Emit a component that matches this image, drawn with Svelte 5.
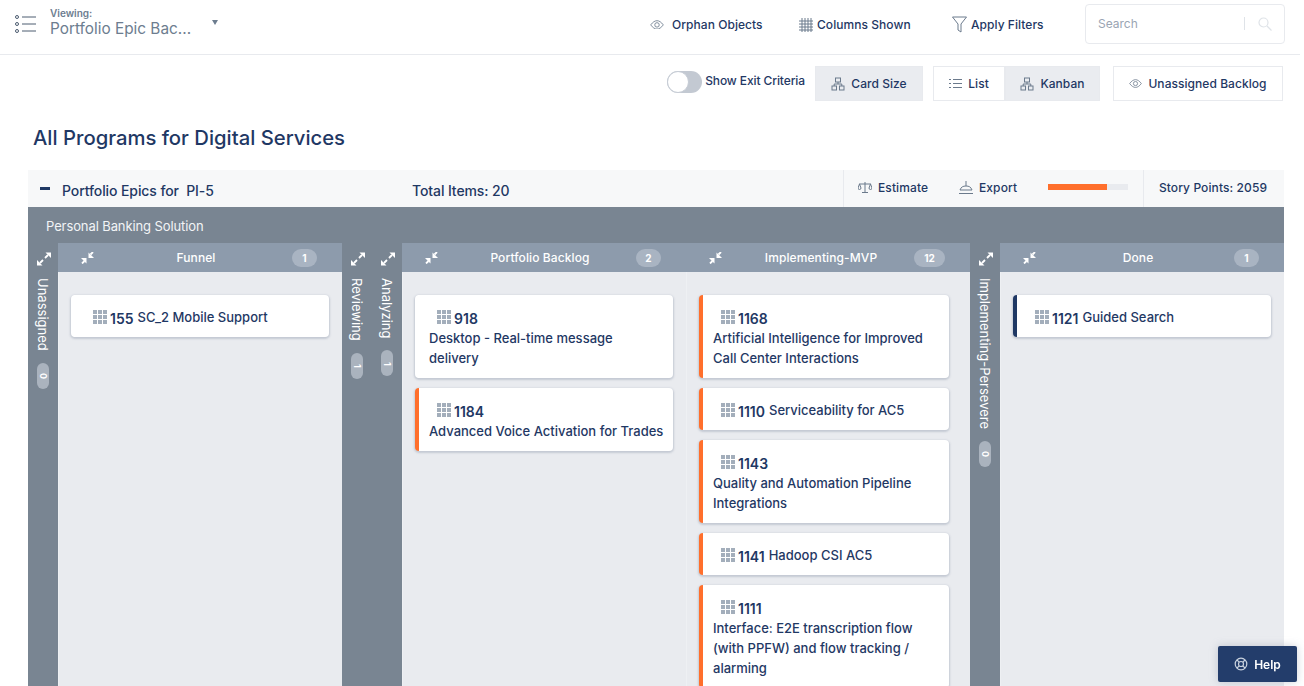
<script>
  const columns = [
    { name: 'Unassigned', count: 0, collapsed: true },
    { name: 'Funnel', count: 1, cards: [{ id: '155', title: 'SC_2 Mobile Support', inline: true, accent: 'none' }] },
    { name: 'Reviewing', count: 1, collapsed: true },
    { name: 'Analyzing', count: 1, collapsed: true },
    { name: 'Portfolio Backlog', count: 2, cards: [
      { id: '918', title: 'Desktop - Real-time message delivery', accent: 'none' },
      { id: '1184', title: 'Advanced Voice Activation for Trades', accent: 'orange' }
    ] },
    { name: 'Implementing-MVP', count: 12, scroll: true, cards: [
      { id: '1168', title: 'Artificial Intelligence for Improved Call Center Interactions', accent: 'orange' },
      { id: '1110', title: 'Serviceability for AC5', inline: true, accent: 'orange' },
      { id: '1143', title: 'Quality and Automation Pipeline Integrations', accent: 'orange' },
      { id: '1141', title: 'Hadoop CSI AC5', inline: true, accent: 'orange' },
      { id: '1111', title: 'Interface: E2E transcription flow (with PPFW) and flow tracking / alarming', accent: 'orange' }
    ] },
    { name: 'Implementing-Persevere', count: 0, collapsed: true },
    { name: 'Done', count: 1, cards: [{ id: '1121', title: 'Guided Search', inline: true, accent: 'navy' }] }
  ];
</script>

{#snippet eye(w)}
  <svg width={w} height={w * 0.7} viewBox="0 0 20 14" fill="none" stroke="#6b7a8c" stroke-width="1.2"><path d="M1 7c3-4 6-6 9-6s6 2 9 6c-3 4-6 6-9 6S4 11 1 7z"/><circle cx="10" cy="7" r="3.2"/></svg>
{/snippet}
{#snippet org()}
  <svg width="14" height="14" viewBox="0 0 14 14" fill="none" stroke="#6b7a8c" stroke-width="1"><rect x="4.5" y="1" width="5" height="4"/><rect x="1" y="9" width="4.5" height="4"/><rect x="8.5" y="9" width="4.5" height="4"/><path d="M7 5v2M3.2 9V7h7.6v2"/></svg>
{/snippet}
{#snippet expand()}
  <svg class="arrows" width="14" height="14" viewBox="0 0 14 14" fill="#fff" stroke="#fff" stroke-width="1.8"><path d="M8 6l3-3M3 11l3-3"/><path d="M8.500 0.500H14V6zM5.500 13.500H0V8z" stroke="none"/></svg>
{/snippet}
{#snippet collapse()}
  <svg class="arrows" width="13" height="12" viewBox="0 0 13 12" fill="#fff" stroke="#fff" stroke-width="1.800"><path d="M9.500 2.500L12 0M1 11.500l2.500-2.500"/><path d="M7.500 0.500V6H13zM5.500 11.500V6H0z" stroke="none"/></svg>
{/snippet}
{#snippet grid()}
  <svg class="grid" width="14" height="14" viewBox="0 0 14 14" fill="#a3aebb"><path d="M0 0h4v4H0zM5 0h4v4H5zM10 0h4v4h-4zM0 5h4v4H0zM5 5h4v4H5zM10 5h4v4h-4zM0 10h4v4H0zM5 10h4v4H5zM10 10h4v4h-4z"/></svg>
{/snippet}

<div class="page">
  <header class="nav">
    <svg class="menu" width="21" height="18" viewBox="0 0 21 18" fill="none" stroke="#4c5c70" stroke-width="1"><circle cx="2" cy="2" r="1.500"/><circle cx="2" cy="9" r="1.500"/><circle cx="2" cy="16" r="1.500"/><path d="M7 2h14M7 9h14M7 16h14"/></svg>
    <div class="viewing">
      <div class="label">Viewing:</div>
      <div class="value">Portfolio Epic Bac...</div>
    </div>
    <span class="caret"></span>
    <div class="nav-actions">
      <span class="act a1">{@render eye(14)}Orphan Objects</span>
      <span class="act a2">
        <svg width="14" height="14" viewBox="0 0 14 14" stroke="#6b7a8c" stroke-width="1"><path d="M3 0v14M6 0v14M9 0v14M12 0v14M0 3h14M0 6h14M0 9h14M0 12h14"/></svg>
        Columns Shown</span>
      <span class="act a3">
        <svg width="15" height="17" viewBox="0 0 15 17" fill="none" stroke="#6b7a8c" stroke-width="1"><path d="M.5 1h14L9 8v8l-3-2V8z"/></svg>
        Apply Filters</span>
    </div>
    <div class="search">
      <span>Search</span>
      <i class="sep"></i>
      <svg width="14" height="14" viewBox="0 0 14 14" fill="none" stroke="#dfe3e8" stroke-width="1.200"><circle cx="5.500" cy="5.500" r="4.500"/><path d="M9 9l4.500 4.500"/></svg>
    </div>
  </header>

  <div class="toolbar">
    <span class="toggle"><i></i></span>
    <span class="exit">Show Exit Criteria</span>
    <button class="btn on size">{@render org()}Card Size</button>
    <div class="seg">
      <button class="btn list">
        <svg width="13" height="11" viewBox="0 0 13 11" fill="none" stroke="#6b7a8c"><path d="M0 1.500h2M4 1.500h9M0 5.500h2M4 5.500h9M0 9.500h2M4 9.500h9"/></svg>
        List</button>
      <button class="btn on kanban">{@render org()}Kanban</button>
    </div>
    <button class="btn backlog">{@render eye(13)}Unassigned Backlog</button>
  </div>

  <h1>All Programs for Digital Services</h1>

  <div class="summary">
    <i class="minus"></i>
    <span class="pi">Portfolio Epics for&nbsp; PI-5</span>
    <span class="total">Total Items: 20</span>
    <div class="metrics">
      <span class="m est">
        <svg width="14" height="11" viewBox="0 0 14 11" fill="none" stroke="#6b7a8c"><path d="M7 0v10M4 10.500h6M1 2h12M0 6l1.500-4L3 6a1.500 1.500 0 01-3 0zM11 6l1.500-4L14 6a1.500 1.500 0 01-3 0z"/></svg>
        Estimate</span>
      <span class="m exp">
        <svg width="14" height="13" viewBox="0 0 14 13" fill="none" stroke="#6b7a8c"><path d="M7 0v5M1 9c1-3 3-4 6-4s5 1 6 4zM0 12.500h14"/></svg>
        Export</span>
      <span class="bar"><i></i></span>
    </div>
    <div class="points">Story Points: 2059</div>
  </div>

  <section class="board">
    <div class="solution">Personal Banking Solution</div>
    <div class="cols">
      {#each columns as c}
        {#if c.collapsed}
          <div class="rail">
            <span class="rail-icon">{@render expand()}</span>
            <span class="rail-name">{c.name}</span>
            <span class="rail-count">{c.count}</span>
          </div>
        {:else}
          <div class="col">
            <div class="col-head">
              {@render collapse()}
              <span class="col-name">{c.name}</span>
              <span class="pill" class:wide={c.count > 9}>{c.count}</span>
            </div>
            <div class="col-body" class:scroll={c.scroll}>
              {#each c.cards as k}
                <article class="card {k.accent}" class:inline={k.inline}>
                  <div class="id">{@render grid()}<b>{k.id}</b>{#if k.inline}<span class="t">{k.title}</span>{/if}</div>
                  {#if !k.inline}<div class="t">{k.title}</div>{/if}
                </article>
              {/each}
            </div>
          </div>
        {/if}
      {/each}
    </div>
  </section>

  <button class="help">
    <svg width="14" height="14" viewBox="0 0 14 14" fill="none" stroke="#c9d2de" stroke-width="1.200"><circle cx="7" cy="7" r="5.800"/><circle cx="7" cy="7" r="2.500"/><path d="M3 3l2.200 2.200M11 3L8.800 5.200M3 11l2.200-2.200M11 11L8.800 8.800"/></svg>
    Help</button>
</div>

<style>
  :global(body) { margin: 0; background: #fff; overflow: hidden; }
  .page { font-family: Inter, "Liberation Sans", sans-serif; color: #1f3864; height: 686px; overflow: hidden; font-size: 12px; font-weight: 500; }
  button { font: inherit; color: inherit; }

  .nav { height: 54px; border-bottom: 1px solid #e8eaee; display: flex; align-items: flex-start; margin-right: 4px; box-sizing: content-box; }
  .menu { margin: 15px 0 0 15px; flex: none; }
  .viewing { margin-left: 14px; width: 162px; flex: none; }
  .label { font-size: 10px; font-weight: 600; color: #6d7d8f; margin-top: 7px; line-height: 12px; }
  .value { font-size: 15.35px; font-weight: 400; color: #6d7d8f; line-height: 20px; }
  .caret { width: 0; height: 0; border: 3.500px solid transparent; border-top: 5px solid #6d7d8f; border-bottom: 0; margin-top: 20px; flex: none; }
  .nav-actions { flex: 1; display: flex; margin-top: 17px; margin-left: 432px; }
  .act { display: inline-flex; align-items: center; gap: 8px; height: 15px; white-space: nowrap; letter-spacing: .05px; flex: none; }
  .a1 { width: 149px; }
  .a2 { width: 153px; gap: 4px; }
  .a3 { gap: 4px; }
  .search { width: 200px; height: 40px; border: 1px solid #e8eaee; border-radius: 4px; display: flex; align-items: center; margin: 4px 15px 0 0; padding: 0 12px 1px; box-sizing: border-box; color: #9aa5b3; flex: none; }
  .search span { flex: 1; font-weight: 400; font-size: 12px; }
  .sep { width: 1px; height: 13px; background: #dfe3e8; margin-right: 13px; }

  .toolbar { display: flex; align-items: flex-start; justify-content: flex-end; margin: 11px 21px 0 0; height: 36px; }
  .toggle { width: 35px; height: 22px; border-radius: 11px; background: #c3c9d2; margin-top: 5px; position: relative; }
  .toggle i { position: absolute; left: 0; top: 0; width: 20px; height: 20px; border-radius: 50%; background: #fff; border: 1px solid #c6ccd5; }
  .exit { margin: 7px 10px 0 3px; line-height: 16px; letter-spacing: -.1px; }
  .btn { height: 35px; border: 1px solid #e8eaee; background: #fff; display: inline-flex; align-items: center; gap: 6px; padding: 0; justify-content: center; box-sizing: border-box; letter-spacing: .05px; }
  .btn.on { background: #eaecf0; }
  .size { width: 108px; }
  .seg { display: flex; margin-left: 10px; }
  .list { width: 72px; }
  .kanban { width: 95px; }
  .backlog { width: 170px; margin-left: 13px; }

  h1 { font-size: 20.25px; font-weight: 500; line-height: 28px; margin: 22px 0 18px 33px; color: #1f3864; }

  .summary { margin: 0 20px 0 28px; height: 37px; background: #f7f8f9; display: flex; align-items: center; font-size: 14px; letter-spacing: -.1px; }
  .minus { width: 10px; height: 3px; background: #1f3864; margin: 0 0 0 12px; flex: none; }
  .pi { margin-left: 12px; width: 350px; white-space: nowrap; padding-top: 4px; }
  .total { flex: 1; padding-top: 4px; }
  .metrics { width: 300px; height: 37px; padding-bottom: 3px; box-sizing: border-box; border-left: 1px solid #e8eaee; display: flex; align-items: center; font-size: 12px; letter-spacing: .1px; }
  .m { display: inline-flex; align-items: center; gap: 6px; }
  .est { margin-left: 14px; width: 101px; }
  .exp { width: 89px; }
  .bar { width: 80px; height: 6px; background: #e9ebef; }
  .bar i { display: block; width: 59px; height: 6px; background: #ff6f2c; }
  .points { width: 141px; height: 37px; border-left: 1px solid #e8eaee; display: flex; align-items: center; justify-content: center; box-sizing: border-box; font-size: 12px; letter-spacing: .1px; padding: 0 2px 3px 0; }

  .board { margin: 0 20px 0 28px; background: #798592; height: 479px; }
  .solution { height: 36px; display: flex; align-items: center; padding: 2px 0 0 18px; box-sizing: border-box; color: #f2f4f6; font-size: 13px; font-weight: 400; letter-spacing: -.1px; }
  .cols { display: flex; height: 443px; }

  .rail { width: 30px; display: flex; flex-direction: column; align-items: center; color: #fff; flex: none; }
  .rail-icon { height: 14px; margin: 9px 0 0 1px; }
  .rail-name { writing-mode: vertical-rl; font-size: 13px; font-weight: 400; margin-top: 12px; line-height: 16px; white-space: nowrap; }
  .rail-count { writing-mode: vertical-rl; margin-top: 12px; width: 12px; height: 26px; border-radius: 6px; background: #aab3be; font-size: 9px; font-weight: 700; display: flex; align-items: center; justify-content: center; }
  .arrows { display: block; flex: none; }

  .col { width: 284px; flex: none; display: flex; flex-direction: column; }
  .col-head { height: 29px; background: #8d9bac; display: flex; align-items: center; color: #fff; padding: 0 25px 0 23px; flex: none; }
  .col-name { flex: 1; text-align: center; font-size: 12px; letter-spacing: .1px; margin-left: 6px; }
  .pill { width: 25px; height: 18px; border-radius: 9px; background: #a9b4c2; font-size: 10px; font-weight: 700; text-align: center; line-height: 18px; flex: none; }
  .pill.wide { width: 31px; }
  .col-body { flex: 1; background: #e9ebef; padding: 23px 13px 0; display: flex; flex-direction: column; gap: 10px; box-shadow: inset 1px 0 0 #eef0f3; overflow: hidden; min-height: 0; }
  .col-body.scroll { padding-right: 21px; }

  .card { background: #fff; border-radius: 4px; padding: 12px 8px 10px 10px; box-shadow: 0 1px 2px 1px rgba(130,140,160,.35); flex: none; color: #1f3864; font-size: 13px; line-height: 20px; border-left: 4px solid #fff; box-sizing: border-box; }
  .card.orange { border-left-color: #ff6f2c; }
  .card.navy { border-left-color: #1f3864; }
  .card.inline { padding: 12px 0 10px 18px; height: 42px; white-space: nowrap; }
  .id { display: flex; align-items: flex-start; height: 20px; padding-left: 8px; }
  .card.inline .id { padding-left: 0; }
  .id b { font-weight: 600; margin: 2px 0 0 3px; font-size: 14px; }
  .grid { margin-top: 3px; flex: none; }
  .card.inline .t { margin-left: 4px; }
  .card:not(.inline) .t { margin-top: 1px; }

  .help { position: fixed; left: 1218px; top: 646px; width: 79px; height: 36px; background: #233d6b; color: #fff; border: 0; border-radius: 2px; display: flex; align-items: center; justify-content: center; gap: 6px; font-size: 12px; font-weight: 600; box-shadow: 0 0 8px rgba(130,140,160,.4); }
</style>
